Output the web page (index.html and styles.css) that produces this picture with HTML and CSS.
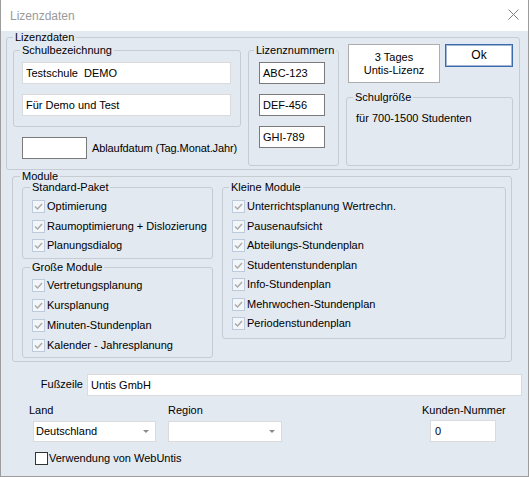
FILE: index.html
```html
<!DOCTYPE html>
<html>
<head>
<meta charset="utf-8">
<title>Lizenzdaten</title>
<link rel="stylesheet" href="styles.css">
</head>
<body>
<div class="window">
  <div class="titlebar">
    <span class="title">Lizenzdaten</span>
    <svg class="close" width="11" height="11" viewBox="0 0 11 11"><path d="M0.5 0.5L10.5 10.5M10.5 0.5L0.5 10.5" stroke="#808080" stroke-width="1" fill="none"/></svg>
  </div>
  <div class="client">
    <fieldset class="grp g-lizenz">
      <legend>Lizenzdaten</legend>
      <div class="lizenz-row">
        <div class="col-school">
          <fieldset class="grp g-schule">
            <legend>Schulbezeichnung</legend>
            <div class="field light wide">Testschule&nbsp; DEMO</div>
            <div class="field light wide second">Für Demo und Test</div>
          </fieldset>
          <div class="ablauf-row">
            <div class="field dark date"></div>
            <span class="ablauf-label">Ablaufdatum (Tag.Monat.Jahr)</span>
          </div>
        </div>
        <fieldset class="grp g-nummern">
          <legend>Lizenznummern</legend>
          <div class="field dark num">ABC-123</div>
          <div class="field dark num">DEF-456</div>
          <div class="field dark num">GHI-789</div>
        </fieldset>
        <div class="col-right">
          <div class="btn-row">
            <div class="btn btn-tages">3 Tages<br>Untis-Lizenz</div>
            <div class="btn btn-ok">Ok</div>
          </div>
          <fieldset class="grp g-groesse">
            <legend>Schulgröße</legend>
            <div class="groesse-text">für 700-1500 Studenten</div>
          </fieldset>
        </div>
      </div>
    </fieldset>

    <fieldset class="grp g-module">
      <legend>Module</legend>
      <div class="mod-row">
        <div class="mod-left">
          <fieldset class="grp g-std">
            <legend>Standard-Paket</legend>
            <div class="chk"><span class="box"><svg width="11" height="11" viewBox="0 0 11 11"><path d="M2 5.5L4.5 8L9 3" stroke="#a9a9a9" stroke-width="1.4" fill="none"/></svg></span><span class="chk-text">Optimierung</span></div>
            <div class="chk"><span class="box"><svg width="11" height="11" viewBox="0 0 11 11"><path d="M2 5.5L4.5 8L9 3" stroke="#a9a9a9" stroke-width="1.4" fill="none"/></svg></span><span class="chk-text">Raumoptimierung + Dislozierung</span></div>
            <div class="chk"><span class="box"><svg width="11" height="11" viewBox="0 0 11 11"><path d="M2 5.5L4.5 8L9 3" stroke="#a9a9a9" stroke-width="1.4" fill="none"/></svg></span><span class="chk-text">Planungsdialog</span></div>
          </fieldset>
          <fieldset class="grp g-gross">
            <legend>Große Module</legend>
            <div class="chk"><span class="box"><svg width="11" height="11" viewBox="0 0 11 11"><path d="M2 5.5L4.5 8L9 3" stroke="#a9a9a9" stroke-width="1.4" fill="none"/></svg></span><span class="chk-text">Vertretungsplanung</span></div>
            <div class="chk"><span class="box"><svg width="11" height="11" viewBox="0 0 11 11"><path d="M2 5.5L4.5 8L9 3" stroke="#a9a9a9" stroke-width="1.4" fill="none"/></svg></span><span class="chk-text">Kursplanung</span></div>
            <div class="chk"><span class="box"><svg width="11" height="11" viewBox="0 0 11 11"><path d="M2 5.5L4.5 8L9 3" stroke="#a9a9a9" stroke-width="1.4" fill="none"/></svg></span><span class="chk-text">Minuten-Stundenplan</span></div>
            <div class="chk"><span class="box"><svg width="11" height="11" viewBox="0 0 11 11"><path d="M2 5.5L4.5 8L9 3" stroke="#a9a9a9" stroke-width="1.4" fill="none"/></svg></span><span class="chk-text">Kalender - Jahresplanung</span></div>
          </fieldset>
        </div>
        <fieldset class="grp g-klein">
          <legend>Kleine Module</legend>
          <div class="chk"><span class="box"><svg width="11" height="11" viewBox="0 0 11 11"><path d="M2 5.5L4.5 8L9 3" stroke="#a9a9a9" stroke-width="1.4" fill="none"/></svg></span><span class="chk-text">Unterrichtsplanung Wertrechn.</span></div>
          <div class="chk"><span class="box"><svg width="11" height="11" viewBox="0 0 11 11"><path d="M2 5.5L4.5 8L9 3" stroke="#a9a9a9" stroke-width="1.4" fill="none"/></svg></span><span class="chk-text">Pausenaufsicht</span></div>
          <div class="chk"><span class="box"><svg width="11" height="11" viewBox="0 0 11 11"><path d="M2 5.5L4.5 8L9 3" stroke="#a9a9a9" stroke-width="1.4" fill="none"/></svg></span><span class="chk-text">Abteilungs-Stundenplan</span></div>
          <div class="chk"><span class="box"><svg width="11" height="11" viewBox="0 0 11 11"><path d="M2 5.5L4.5 8L9 3" stroke="#a9a9a9" stroke-width="1.4" fill="none"/></svg></span><span class="chk-text">Studentenstundenplan</span></div>
          <div class="chk"><span class="box"><svg width="11" height="11" viewBox="0 0 11 11"><path d="M2 5.5L4.5 8L9 3" stroke="#a9a9a9" stroke-width="1.4" fill="none"/></svg></span><span class="chk-text">Info-Stundenplan</span></div>
          <div class="chk"><span class="box"><svg width="11" height="11" viewBox="0 0 11 11"><path d="M2 5.5L4.5 8L9 3" stroke="#a9a9a9" stroke-width="1.4" fill="none"/></svg></span><span class="chk-text">Mehrwochen-Stundenplan</span></div>
          <div class="chk"><span class="box"><svg width="11" height="11" viewBox="0 0 11 11"><path d="M2 5.5L4.5 8L9 3" stroke="#a9a9a9" stroke-width="1.4" fill="none"/></svg></span><span class="chk-text">Periodenstundenplan</span></div>
        </fieldset>
      </div>
    </fieldset>

    <div class="fuss-row">
      <span class="fuss-label">Fußzeile</span>
      <div class="field light fuss">Untis GmbH</div>
    </div>

    <div class="loc-row">
      <div class="loc land">
        <div class="loc-label">Land</div>
        <div class="select land-select"><span>Deutschland</span><span class="arrow"></span></div>
      </div>
      <div class="loc region">
        <div class="loc-label">Region</div>
        <div class="select region-select"><span></span><span class="arrow"></span></div>
      </div>
      <div class="loc kunden">
        <div class="loc-label">Kunden-Nummer</div>
        <div class="field light kunden-field">0</div>
      </div>
    </div>

    <div class="web-row">
      <span class="box plain"></span>
      <span class="chk-text">Verwendung von WebUntis</span>
    </div>
  </div>
</div>
</body>
</html>
```

FILE: styles.css
```css
* {
  box-sizing: border-box;
}

html, body {
  margin: 0;
  padding: 0;
  background: #ffffff;
}

body {
  font-family: "Liberation Sans", Arial, sans-serif;
  font-size: 11px;
  line-height: 13px;
  color: #000000;
}

.window {
  width: 529px;
  height: 477px;
  border: 1px solid #9c9c9c;
  border-top: none;
  display: flex;
  flex-direction: column;
  background: #e3e9f1;
}

.titlebar {
  height: 31px;
  flex: 0 0 31px;
  background: #ffffff;
  display: flex;
  align-items: center;
  justify-content: space-between;
  padding-left: 9px;
  padding-right: 9px;
}

.title {
  font-size: 12px;
  color: #9a9a9a;
  padding-top: 1px;
}

.close {
  display: block;
  margin-top: -2px;
}

.client {
  flex: 1;
  display: flex;
  flex-direction: column;
  align-items: flex-start;
}

/* group boxes */
.grp {
  margin: 0;
  border: 1px solid #c7ccd3;
  border-radius: 3px;
  min-width: 0;
}

.grp > legend {
  padding: 0 2px;
  line-height: 13px;
  font-size: 11px;
}

.g-lizenz {
  margin-left: 5px;
  width: 514px;
  padding: 0 6px 3px 6px;
}

.g-lizenz > legend {
  margin-left: 0;
}

.lizenz-row {
  display: flex;
  align-items: flex-start;
}

.col-school {
  width: 228px;
  display: flex;
  flex-direction: column;
}

.g-schule {
  width: 228px;
  padding: 5px 9px 10px 8px;
}

.g-schule > legend {
  margin-left: -2px;
}

.field {
  height: 22px;
  line-height: 20px;
  padding: 0 3px;
  background: #ffffff;
  white-space: nowrap;
}

.field.light {
  border: 1px solid #d9dbdf;
}

.field.dark {
  border: 1px solid #7a7a7a;
}

.field.wide {
  width: 209px;
}

.field.second {
  margin-top: 10px;
}

.ablauf-row {
  margin-top: 10px;
  display: flex;
  align-items: center;
}

.field.date {
  width: 65px;
  margin-left: 9px;
}

.ablauf-label {
  margin-left: 5px;
  letter-spacing: -0.1px;
}

.g-nummern {
  margin-left: 7px;
  width: 91px;
  padding: 5px 13px 17px 10px;
}

.g-nummern > legend {
  margin-left: -5px;
}

.field.num {
  width: 66px;
}

.field.num + .field.num {
  margin-top: 10px;
}

.col-right {
  margin-left: 7px;
  width: 167px;
  display: flex;
  flex-direction: column;
}

.btn-row {
  display: flex;
  align-items: flex-start;
  padding-left: 2px;
}

.btn {
  background: #ffffff;
  display: flex;
  align-items: center;
  justify-content: center;
  text-align: center;
}

.btn-tages {
  width: 92px;
  height: 39px;
  border: 1px solid #adadad;
}

.btn-ok {
  margin-left: 5px;
  width: 68px;
  height: 23px;
  border: 1px solid #3d6aa8;
  box-shadow: inset 0 0 0 1px #9fb6d6;
  font-size: 12px;
}

.g-groesse {
  margin-top: 8px;
  width: 167px;
  padding: 8px 9px 40px 9px;
}

.g-groesse > legend {
  margin-left: -3px;
}

/* modules */
.g-module {
  margin-left: 11px;
  width: 500px;
  padding: 0 5px 3px 9px;
}

.g-module > legend {
  margin-left: -2px;
}

.mod-row {
  display: flex;
  align-items: flex-start;
}

.mod-left {
  width: 191px;
  display: flex;
  flex-direction: column;
}

.g-std {
  margin-top: -2px;
  width: 191px;
  padding: 3px 6px 2px 9px;
}

.g-gross {
  margin-top: 2px;
  width: 191px;
  padding: 2px 6px 1px 9px;
}

.g-std > legend,
.g-gross > legend {
  margin-left: -2px;
}

.g-klein {
  margin-top: -2px;
  margin-left: 9px;
  width: 284px;
  padding: 3px 6px 4px 9px;
}

.g-klein > legend {
  margin-left: -3px;
}

.chk {
  display: flex;
  align-items: center;
  height: 19.5px;
  white-space: nowrap;
}

.g-gross .chk {
  height: 20px;
}

.box {
  width: 13px;
  height: 13px;
  flex: 0 0 13px;
  border: 1px solid #bccadb;
  background: #f3f6f9;
  display: flex;
  align-items: center;
  justify-content: center;
}

.box svg {
  display: block;
}

.box.plain {
  border: 1px solid #333333;
  background: #ffffff;
}

.chk-text {
  margin-left: 2px;
}

/* footer */
.fuss-row {
  margin-top: 12px;
  display: flex;
  align-items: center;
}

.fuss-label {
  width: 82px;
  text-align: right;
}

.field.fuss {
  margin-left: 4px;
  width: 435px;
}

.loc-row {
  margin-top: 8px;
  display: flex;
  align-items: flex-start;
  padding-left: 28px;
}

.loc {
  display: flex;
  flex-direction: column;
}

.land {
  width: 127px;
}

.region {
  margin-left: 12px;
  width: 114px;
}

.kunden {
  margin-left: 140px;
  width: 86px;
  align-items: flex-start;
}

.loc-label {
  height: 13px;
  white-space: nowrap;
}

.select {
  margin-top: 4px;
  height: 21px;
  background: #ffffff;
  border: 1px solid #d9dbdf;
  display: flex;
  align-items: center;
  justify-content: space-between;
  padding: 0 6px 0 2px;
}

.land-select {
  margin-left: 4px;
  width: 123px;
}

.region-select {
  width: 114px;
}

.arrow {
  width: 0;
  height: 0;
  border-left: 3px solid transparent;
  border-right: 3px solid transparent;
  border-top: 3px solid #8a8a8a;
}

.field.kunden-field {
  margin-top: 3px;
  margin-left: 8px;
  width: 66px;
  padding-left: 4px;
}

.web-row {
  margin-top: 10px;
  display: flex;
  align-items: center;
  padding-left: 34px;
}

.web-row .chk-text {
  margin-left: 1px;
}
```
